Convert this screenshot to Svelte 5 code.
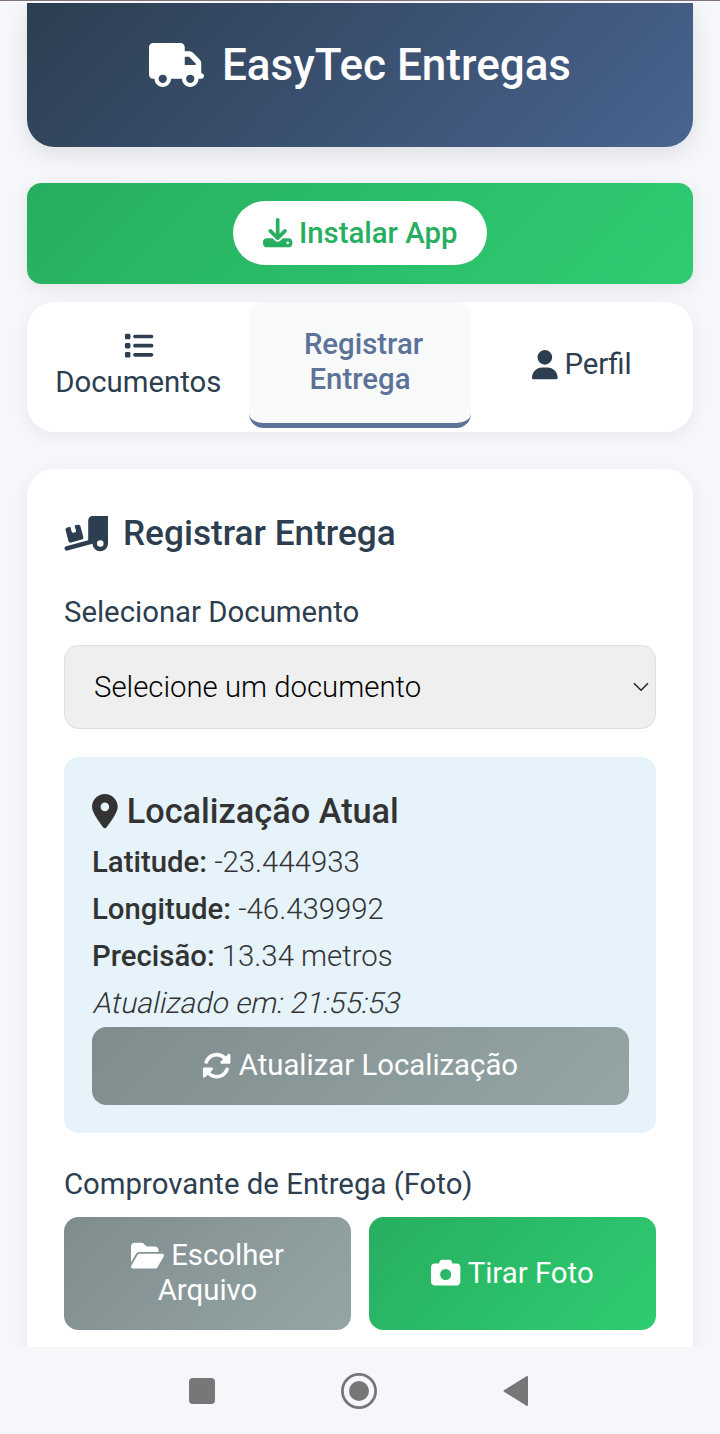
<script>
  // Font Awesome style glyphs: viewBox width + path
  const icons = {
    truck: {
      w: 640,
      d: 'M48 0C21.5 0 0 21.5 0 48L0 368c0 26.5 21.5 48 48 48l16 0c0 53 43 96 96 96s96-43 96-96l128 0c0 53 43 96 96 96s96-43 96-96l32 0c17.7 0 32-14.3 32-32s-14.3-32-32-32l0-64 0-32 0-18.7c0-17-6.7-33.3-18.7-45.3L512 114.7c-12-12-28.3-18.7-45.3-18.7L416 96l0-48c0-26.5-21.5-48-48-48L48 0zM416 160l50.7 0L544 237.3l0 18.7-128 0 0-96zM112 416a48 48 0 1 1 96 0 48 48 0 1 1 -96 0zm368-48a48 48 0 1 1 0 96 48 48 0 1 1 0-96z',
    },
    download: {
      w: 512,
      d: 'M288 32c0-17.7-14.3-32-32-32s-32 14.3-32 32l0 242.7-73.4-73.4c-12.5-12.5-32.8-12.5-45.3 0s-12.5 32.8 0 45.3l128 128c12.5 12.5 32.8 12.5 45.3 0l128-128c12.5-12.5 12.5-32.8 0-45.3s-32.8-12.5-45.3 0L288 274.7 288 32zM64 352c-35.3 0-64 28.7-64 64l0 32c0 35.3 28.7 64 64 64l384 0c35.3 0 64-28.7 64-64l0-32c0-35.3-28.7-64-64-64l-101.5 0-45.3 45.3c-25 25-65.5 25-90.5 0L165.5 352 64 352zm368 56a24 24 0 1 1 0 48 24 24 0 1 1 0-48z',
    },
    list: {
      w: 512,
      d: 'M40 48C26.7 48 16 58.7 16 72l0 48c0 13.3 10.7 24 24 24l48 0c13.3 0 24-10.7 24-24l0-48c0-13.3-10.7-24-24-24L40 48zM192 64c-17.7 0-32 14.3-32 32s14.3 32 32 32l288 0c17.7 0 32-14.3 32-32s-14.3-32-32-32L192 64zm0 160c-17.7 0-32 14.3-32 32s14.3 32 32 32l288 0c17.7 0 32-14.3 32-32s-14.3-32-32-32l-288 0zm0 160c-17.7 0-32 14.3-32 32s14.3 32 32 32l288 0c17.7 0 32-14.3 32-32s-14.3-32-32-32l-288 0zM16 232l0 48c0 13.3 10.7 24 24 24l48 0c13.3 0 24-10.7 24-24l0-48c0-13.3-10.7-24-24-24l-48 0c-13.3 0-24 10.7-24 24zM40 368c-13.3 0-24 10.7-24 24l0 48c0 13.3 10.7 24 24 24l48 0c13.3 0 24-10.7 24-24l0-48c0-13.3-10.7-24-24-24l-48 0z',
    },
    user: {
      w: 448,
      d: 'M224 256A128 128 0 1 0 224 0a128 128 0 1 0 0 256zm-45.7 48C79.8 304 0 383.8 0 482.3C0 498.7 13.3 512 29.7 512l388.6 0c16.4 0 29.7-13.3 29.7-29.7C448 383.8 368.2 304 269.7 304l-91.4 0z',
    },
    ramp: {
      w: 640,
      d: 'M640 0l0 400c0 61.9-50.1 112-112 112c-61 0-110.5-48.7-112-109.3L48.4 502.9c-17.1 4.6-34.6-5.4-39.3-22.5s5.4-34.6 22.5-39.3L352 353.8 352 64c0-35.3 28.7-64 64-64L640 0zM576 400a48 48 0 1 0 -96 0 48 48 0 1 0 96 0zM23.1 207.7c-4.6-17.1 5.6-34.6 22.6-39.2l46.4-12.4 20.7 77.3c2.3 8.5 11.1 13.6 19.6 11.3l30.9-8.3c8.5-2.3 13.6-11.1 11.3-19.6l-20.7-77.3 46.4-12.4c17.1-4.6 34.6 5.6 39.2 22.6l41.4 154.5c4.6 17.1-5.6 34.6-22.6 39.2L103.7 384.9c-17.1 4.6-34.6-5.6-39.2-22.6L23.1 207.7z',
    },
    pin: {
      w: 384,
      d: 'M215.7 499.2C267 435 384 279.4 384 192C384 86 298 0 192 0S0 86 0 192c0 87.4 117 243 168.3 307.2c12.3 15.3 35.1 15.3 47.4 0zM192 128a64 64 0 1 1 0 128 64 64 0 1 1 0-128z',
    },
    sync: {
      w: 512,
      d: 'M142.9 142.9c-17.5 17.5-30.1 38-37.8 59.8c-5.9 16.7-24.2 25.4-40.8 19.5s-25.4-24.2-19.5-40.8C55.6 150.7 73.2 122 97.6 97.6c87.2-87.2 228.3-87.5 315.8-1L455 55c6.9-6.9 17.2-8.9 26.2-5.2s14.8 12.5 14.8 22.2l0 128c0 13.3-10.7 24-24 24l-8.4 0c0 0 0 0 0 0L344 224c-9.7 0-18.5-5.8-22.2-14.8s-1.7-19.3 5.2-26.2l41.1-41.1c-62.6-61.5-163.1-61.2-225.3 1zM16 312c0-13.3 10.7-24 24-24l7.6 0 .7 0L168 288c9.7 0 18.5 5.8 22.2 14.8s1.7 19.3-5.2 26.2l-41.1 41.1c62.6 61.5 163.1 61.2 225.3-1c17.5-17.5 30.1-38 37.8-59.8c5.9-16.7 24.2-25.4 40.8-19.5s25.4 24.2 19.5 40.8c-10.8 30.6-28.4 59.3-52.9 83.8c-87.2 87.2-228.3 87.5-315.8 1L57 457c-6.9 6.9-17.2 8.9-26.2 5.2S16 449.7 16 440l0-119.6 0-.7 0-7.6z',
    },
    folder: {
      w: 576,
      d: 'M88.7 223.8L0 375.8 0 96C0 60.7 28.7 32 64 32l117.5 0c17 0 33.3 6.7 45.3 18.7l26.5 26.5c12 12 28.3 18.7 45.3 18.7L416 96c35.3 0 64 28.7 64 64l0 32-336 0c-22.8 0-43.8 12.1-55.3 31.8zm27.6 16.1C122.1 230 132.6 224 144 224l400 0c11.5 0 22 6.1 27.7 16.1s5.7 22.2-.1 32.1l-112 192C453.9 474 443.4 480 432 480L32 480c-11.5 0-22-6.1-27.7-16.1s-5.7-22.2 .1-32.1l112-192z',
    },
    camera: {
      w: 512,
      d: 'M149.1 64.8L138.7 96 64 96C28.7 96 0 124.7 0 160L0 416c0 35.3 28.7 64 64 64l384 0c35.3 0 64-28.7 64-64l0-256c0-35.3-28.7-64-64-64l-74.7 0L362.9 64.8C356.4 45.2 338.1 32 317.4 32L194.6 32c-20.7 0-39 13.2-45.5 32.8zM256 192a96 96 0 1 1 0 192 96 96 0 1 1 0-192z',
    },
  };

  const location = [
    { label: 'Latitude:', value: '-23.444933' },
    { label: 'Longitude:', value: '-46.439992' },
    { label: 'Precisão:', value: '13.34 metros' },
  ];

  let activeTab = $state('registrar');
</script>

{#snippet icon(name)}
  <svg class="icon" viewBox="0 0 {icons[name].w} 512" aria-hidden="true"><path d={icons[name].d} /></svg>
{/snippet}

<div class="screen">
  <div class="status-edge"></div>

  <main class="container">
    <header>
      <h1>{@render icon('truck')}<span>EasyTec Entregas</span></h1>
    </header>

    <div class="install-banner">
      <button class="install-btn">{@render icon('download')}<span>Instalar App</span></button>
    </div>

    <nav class="tabs">
      <button class="tab stacked" class:active={activeTab === 'documentos'} onclick={() => (activeTab = 'documentos')}>
        {@render icon('list')}<span>Documentos</span>
      </button>
      <button class="tab" class:active={activeTab === 'registrar'} onclick={() => (activeTab = 'registrar')}>
        <span class="two-line">Registrar<br />Entrega</span>
      </button>
      <button class="tab single" class:active={activeTab === 'perfil'} onclick={() => (activeTab = 'perfil')}>
        {@render icon('user')}<span>Perfil</span>
      </button>
    </nav>

    <section class="card">
      <h2>{@render icon('ramp')}<span>Registrar Entrega</span></h2>

      <div class="label">Selecionar Documento</div>
      <button class="select">
        <span>Selecione um documento</span>
        <svg class="chevron" viewBox="0 0 16 10" aria-hidden="true"><path d="M1 1.2l7 7 7-7" /></svg>
      </button>

      <div class="location">
        <h3>{@render icon('pin')}<span>Localização Atual</span></h3>
        {#each location as row}
          <p><strong>{row.label}</strong> {row.value}</p>
        {/each}
        <p><em>Atualizado em: 21:55:53</em></p>
        <button class="btn secondary refresh">{@render icon('sync')}<span>Atualizar Localização</span></button>
      </div>

      <div class="label photo-label">Comprovante de Entrega (Foto)</div>
      <div class="photo-actions">
        <button class="btn secondary wrap">
          <span class="line">{@render icon('folder')}<span>Escolher</span></span>
          <span>Arquivo</span>
        </button>
        <button class="btn success">{@render icon('camera')}<span>Tirar Foto</span></button>
      </div>
    </section>
  </main>

  <footer class="system-nav">
    <svg viewBox="0 0 26 26" width="26" height="26"><rect width="26" height="26" rx="4" /></svg>
    <svg viewBox="0 0 36 36" width="36" height="36">
      <circle class="ring" cx="18" cy="18" r="16.6" />
      <circle cx="18" cy="18" r="10" />
    </svg>
    <svg viewBox="0 0 26 30" width="26" height="30"><path d="M24 1v28L1.5 15z" /></svg>
  </footer>
</div>

<style>
  :global(body) {
    margin: 0;
    background: #f5f7fb;
  }

  .screen {
    display: flex;
    flex-direction: column;
    width: 720px;
    height: 1434px;
    overflow: hidden;
    background: #f5f7fb;
    color: #333;
    font-family: Roboto, sans-serif;
    font-size: 29.35px;
    font-weight: 300;
    line-height: 35px;
  }

  .status-edge {
    flex: none;
    height: 1px;
    margin-bottom: 2px;
    background: #81747a;
  }

  .container {
    flex: 1;
    min-height: 0;
    overflow: hidden;
    padding: 0 27.4px;
  }

  h1,
  h2,
  h3,
  p {
    margin: 0;
  }

  button {
    border: none;
    margin: 0;
    font: inherit;
    color: inherit;
    cursor: pointer;
  }

  .icon {
    height: 1em;
    flex: none;
    fill: currentColor;
    overflow: visible;
  }

  header {
    box-sizing: border-box;
    height: 144px;
    padding-top: 36px;
    border-radius: 0 0 27.5px 27.5px;
    background: linear-gradient(135deg, #2c3e50, #4a6491);
    color: #fff;
    box-shadow: 0 7px 22px rgba(0, 0, 0, 0.1);
  }

  h1 {
    display: flex;
    justify-content: center;
    align-items: center;
    gap: 18px;
    font-size: 44px;
    font-weight: 500;
    line-height: 52px;
  }

  .install-banner {
    display: flex;
    justify-content: center;
    align-items: center;
    box-sizing: border-box;
    height: 101px;
    margin-top: 36px;
    padding-bottom: 1px;
    border-radius: 14.6px;
    background: linear-gradient(135deg, #27ae60, #2ecc71);
    box-shadow: 0 4px 18px rgba(0, 0, 0, 0.08);
  }

  .install-btn {
    display: flex;
    justify-content: center;
    align-items: center;
    gap: 7px;
    width: 254px;
    height: 64px;
    padding: 0;
    border-radius: 46px;
    background: #fff;
    color: #27ae60;
    font-weight: 500;
  }

  .tabs {
    display: grid;
    grid-template-columns: repeat(3, 1fr);
    height: 130px;
    margin-top: 18px;
    border-radius: 27.5px;
    background: #fff;
    overflow: hidden;
    box-shadow: 0 4px 18px rgba(0, 0, 0, 0.06);
  }

  .tab {
    display: flex;
    justify-content: center;
    align-items: center;
    gap: 7px;
    box-sizing: border-box;
    height: 126px;
    padding: 0 0 2px;
    border-bottom: 5px solid transparent;
    background: none;
    color: #2c3e50;
    font-weight: 400;
  }

  .tab.stacked {
    flex-direction: column;
    gap: 4px;
    padding: 6px 0 0;
  }

  .tab.single {
    padding: 4px 0 0;
  }

  .tab.active {
    border-bottom-color: #5d7299;
    border-radius: 14.6px;
    background: #f8faf9;
    color: #5d7299;
    font-weight: 500;
  }

  .two-line::before {
    content: '';
    display: inline-block;
    width: 7px;
  }

  .card {
    height: 900px;
    box-sizing: border-box;
    margin-top: 37px;
    padding: 36.6px;
    border-radius: 27.5px;
    background: #fff;
    box-shadow: 0 4px 18px rgba(0, 0, 0, 0.06);
  }

  h2 {
    display: flex;
    align-items: center;
    gap: 15px;
    height: 56px;
    color: #2c3e50;
    font-size: 35.2px;
    font-weight: 500;
  }

  .label {
    margin-top: 33px;
    color: #2c3e50;
    font-weight: 400;
  }

  .select {
    display: flex;
    justify-content: space-between;
    align-items: center;
    box-sizing: border-box;
    width: 100%;
    height: 84px;
    margin-top: 15px;
    padding: 1px 6px 0 29px;
    border: 1.8px solid #ddd;
    border-radius: 14.6px;
    background: #efefef;
    color: #000;
  }

  .chevron {
    width: 16px;
    height: 10px;
    fill: none;
    stroke: #222;
    stroke-width: 1.5;
  }

  .location {
    box-sizing: border-box;
    height: 376px;
    margin-top: 28px;
    padding: 27.5px 27.5px 27.5px 28px;
    border-radius: 14.6px;
    background: #e6f3fb;
  }

  h3 {
    display: flex;
    align-items: center;
    gap: 9px;
    height: 55px;
    font-size: 34.3px;
    font-weight: 500;
  }

  .location p {
    line-height: 46.9px;
  }

  .location strong {
    font-weight: 500;
  }

  /* slanted upright face, wider than the real italic */
  .location em {
    display: inline-block;
    font-style: normal;
    transform: skewX(-12deg);
    transform-origin: 0 72%;
  }

  .btn {
    display: flex;
    justify-content: center;
    align-items: center;
    gap: 7px;
    padding: 0;
    border-radius: 14.6px;
    color: #fff;
    font-weight: 400;
  }

  .secondary {
    background: linear-gradient(135deg, #7f8c8d, #95a5a6);
  }

  .success {
    background: linear-gradient(135deg, #27ae60, #2ecc71);
  }

  .refresh {
    width: 100%;
    height: 78px;
  }

  .photo-label {
    margin-top: 34px;
  }

  .photo-actions {
    display: grid;
    grid-template-columns: 1fr 1fr;
    gap: 18px;
    height: 113px;
    margin-top: 15px;
  }

  .wrap {
    flex-direction: column;
    gap: 0;
  }

  .line {
    display: flex;
    align-items: center;
    gap: 7px;
  }

  .system-nav {
    display: flex;
    flex: none;
    justify-content: center;
    align-items: center;
    gap: 126px;
    height: 87px;
    padding-right: 2px;
    background: #f5f7fb;
    fill: #777;
  }

  .system-nav path {
    stroke: #777;
    stroke-width: 2;
    stroke-linejoin: round;
  }

  .system-nav .ring {
    fill: none;
    stroke: #777;
    stroke-width: 2.8;
  }
</style>
